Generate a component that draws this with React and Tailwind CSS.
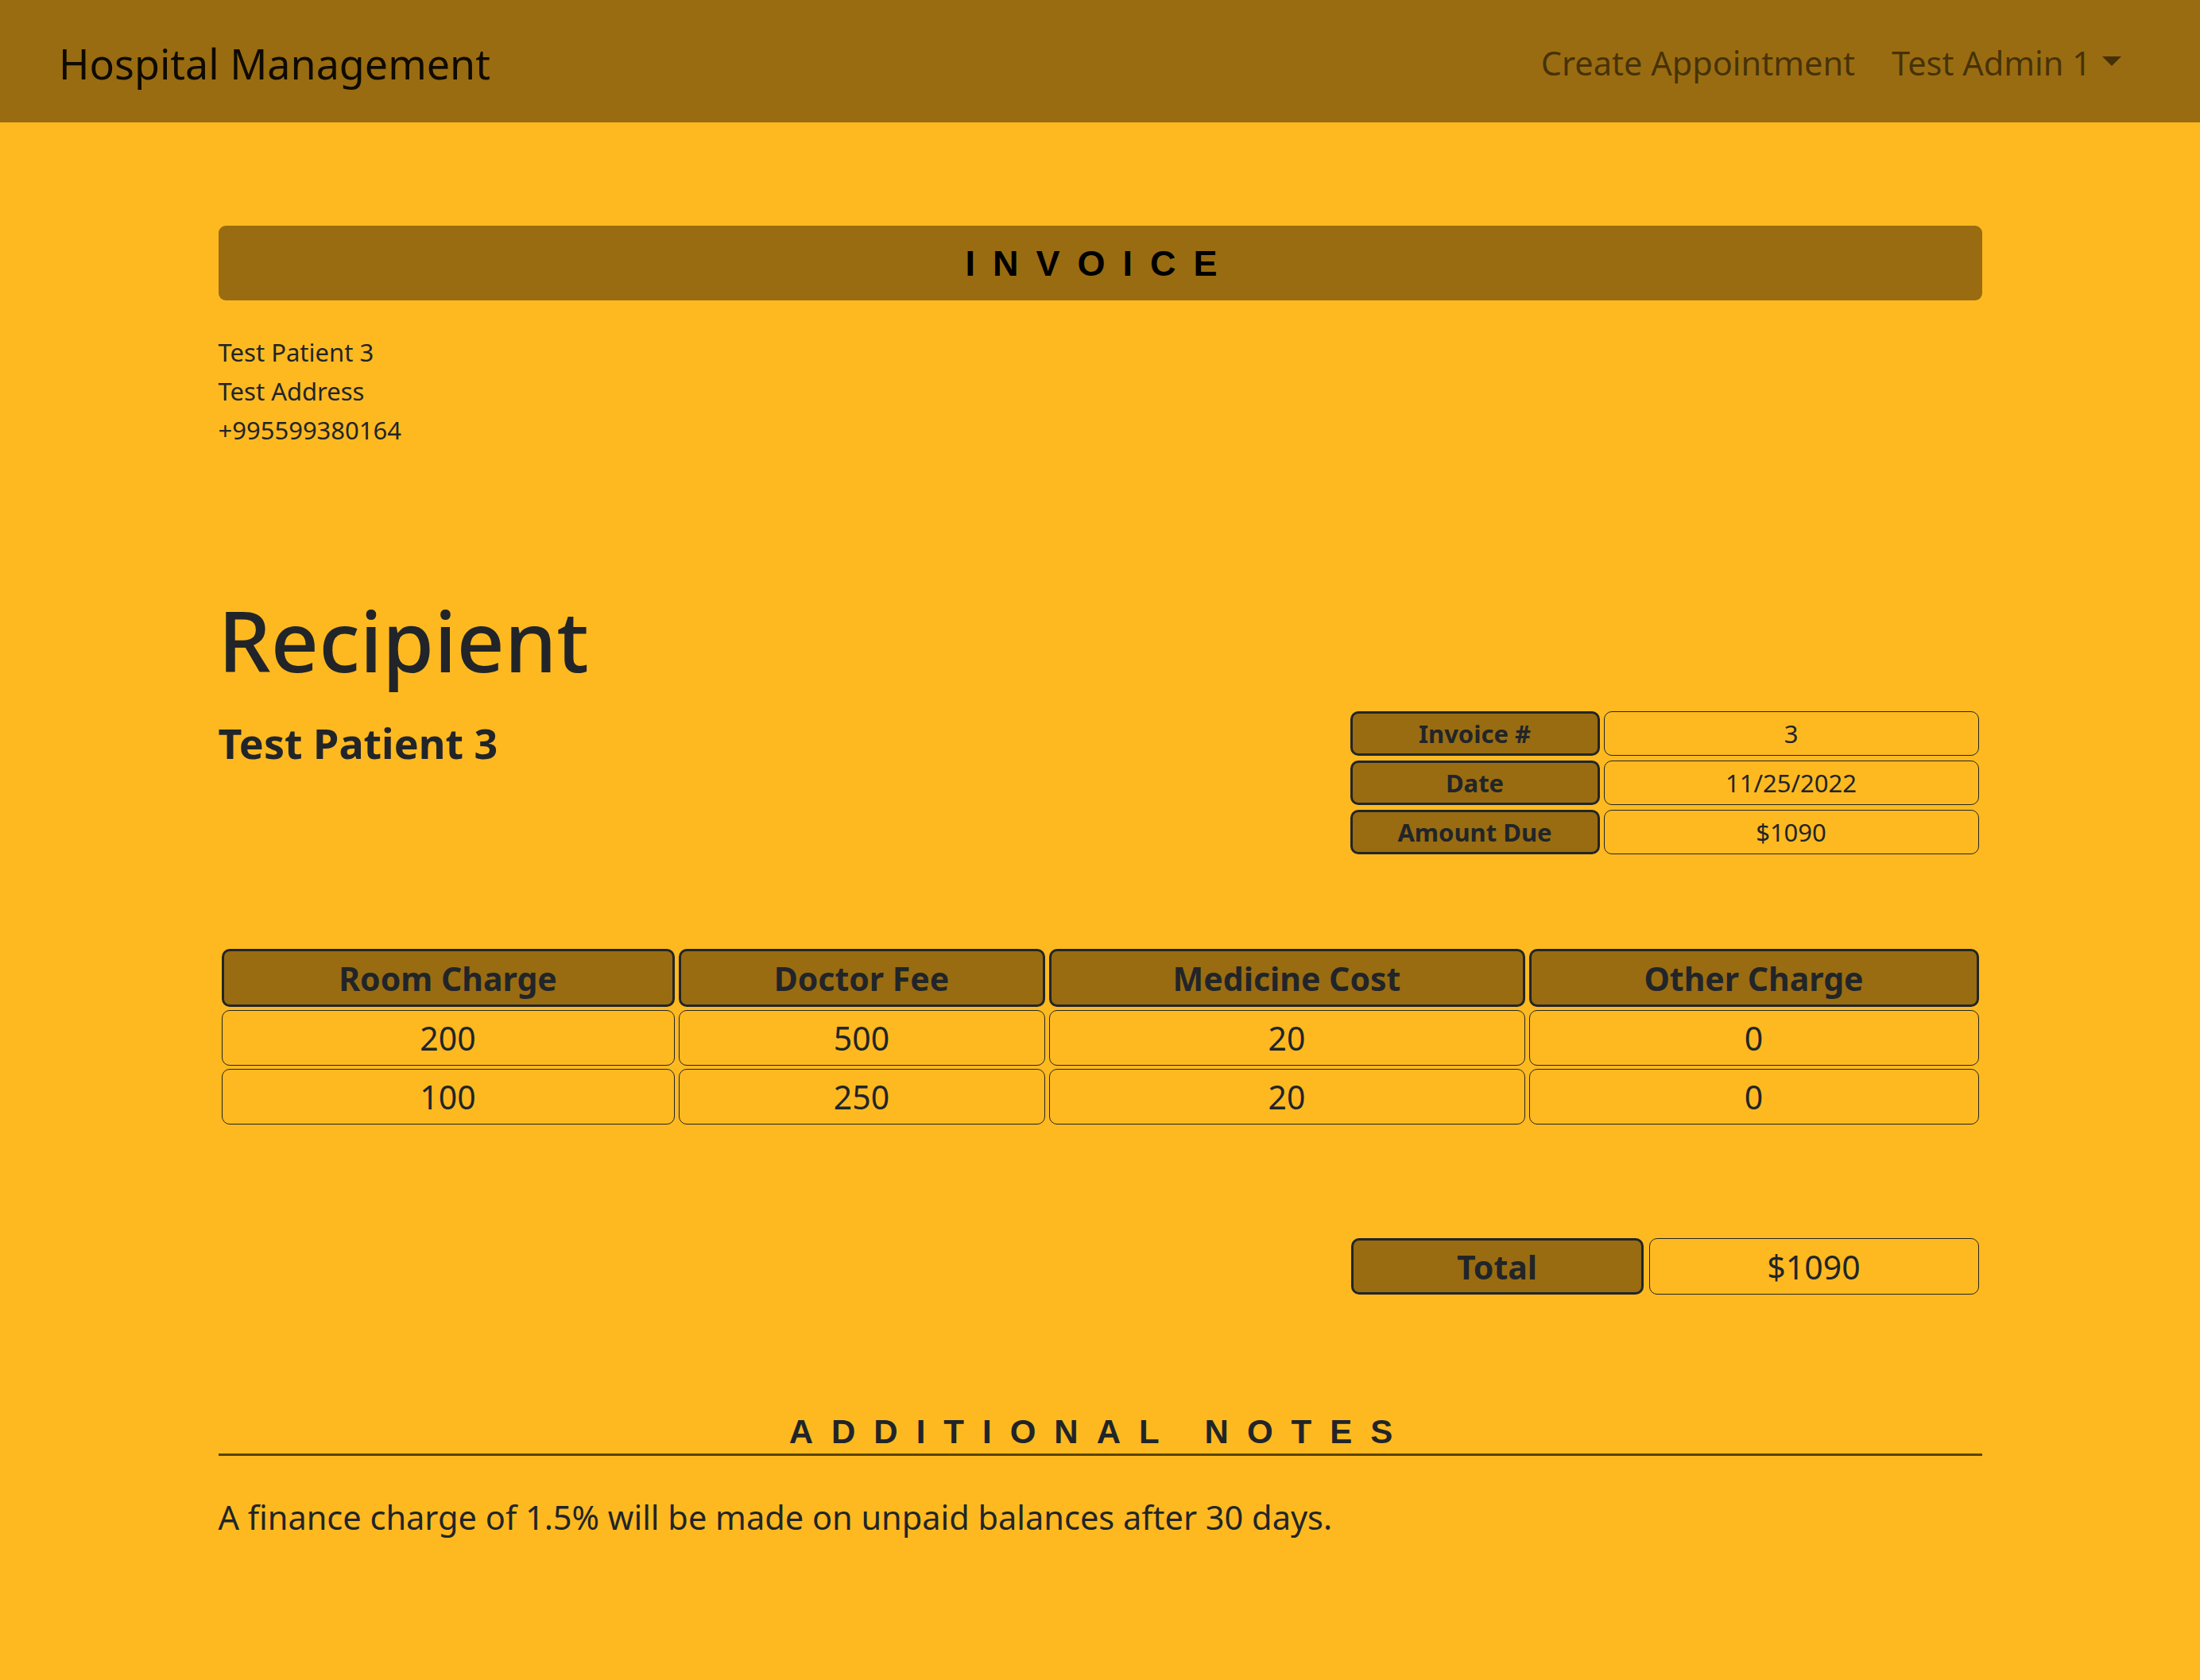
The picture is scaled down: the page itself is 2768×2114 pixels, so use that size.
export default function App() {
  const sans = { fontFamily: '"Noto Sans", "Open Sans", sans-serif' };
  const arial = { fontFamily: '"Liberation Sans", Arial, sans-serif' };
  const cols = "grid grid-cols-[570px_461px_599px_566px] gap-[5px]";
  const rows = [
    ["200", "500", "20", "0"],
    ["100", "250", "20", "0"],
  ];
  const info = [
    ["Invoice #", "3"],
    ["Date", "11/25/2022"],
    ["Amount Due", "$1090"],
  ];
  return (
    <div className="min-h-screen bg-[#ffb920] text-[#212529]" style={sans}>
      <nav className="h-[154px] bg-[#996c11] flex items-center justify-between pl-[74px] pr-[99px] pt-[6px]">
        <div className="text-[52px] text-black/90 leading-none">Hospital Management</div>
        <div className="flex items-center text-[41.5px] text-black/55 leading-none">
          <span>Create Appointment</span>
          <span className="ml-[46px]">Test Admin 1</span>
          <span className="ml-[14px] mb-[6px] w-0 h-0 border-l-[12px] border-r-[12px] border-t-[12px] border-l-transparent border-r-transparent border-t-black/55"></span>
        </div>
      </nav>

      <main className="w-[2219px] mx-auto">
        <div className="mt-[130px] h-[94px] rounded-[9px] bg-[#996c11] flex items-center justify-center">
          <h2 className="text-[45px] font-bold tracking-[22px] text-black leading-none" style={arial}>INVOICE</h2>
        </div>

        <div className="mt-[41px] text-[31px] leading-[49px]">
          <div>Test Patient 3</div>
          <div>Test Address</div>
          <div>+995599380164</div>
        </div>

        <h1 className="mt-[177px] text-[105px] font-medium leading-[1.2]">Recipient</h1>

        <div className="mt-[26px] flex justify-between items-start">
          <h3 className="mt-[9px] text-[52px] font-bold leading-[1.2]">Test Patient 3</h3>
          <div className="mr-[4px] flex flex-col gap-[6px]">
            {info.map(([k, v]) => (
              <div key={k} className="flex gap-[5px]">
                <div className="w-[314px] h-[56px] rounded-[10px] border-[3px] border-[#212529] bg-[#996c11] flex items-center justify-center text-[31px] font-bold">
                  {k}
                </div>
                <div className="w-[472px] h-[56px] rounded-[10px] border-[1.5px] border-[#212529] flex items-center justify-center text-[31px]">
                  {v}
                </div>
              </div>
            ))}
          </div>
        </div>

        <div className="mt-[119px] px-[4px] flex flex-col gap-[4px]">
          <div className={cols}>
            {["Room Charge", "Doctor Fee", "Medicine Cost", "Other Charge"].map((h) => (
              <div key={h} className="h-[73px] pt-[2px] rounded-[10px] border-[3px] border-[#212529] bg-[#996c11] flex items-center justify-center text-[41px] font-bold">
                {h}
              </div>
            ))}
          </div>
          {rows.map((r, i) => (
            <div key={i} className={cols}>
              {r.map((c, j) => (
                <div key={j} className="h-[70px] pt-[2px] rounded-[10px] border-[1.5px] border-[#212529] flex items-center justify-center text-[41px]">
                  {c}
                </div>
              ))}
            </div>
          ))}
        </div>

        <div className="mt-[143px] pr-[4px] flex justify-end gap-[7px]">
          <div className="w-[368px] h-[71px] pt-[2px] rounded-[10px] border-[3px] border-[#212529] bg-[#996c11] flex items-center justify-center text-[41px] font-bold">
            Total
          </div>
          <div className="w-[415px] h-[71px] pt-[2px] rounded-[10px] border-[1.5px] border-[#212529] flex items-center justify-center text-[41px]">
            $1090
          </div>
        </div>

        <h4 className="mt-[148px] pb-[2px] border-b-[3px] border-[#5c4309] text-center text-[42px] font-bold tracking-[23px] leading-[1.2]" style={arial}>
          ADDITIONAL NOTES
        </h4>
        <p className="mt-[46px] text-[41.5px] leading-[1.5]">
          A finance charge of 1.5% will be made on unpaid balances after 30 days.
        </p>
      </main>
    </div>
  );
}
